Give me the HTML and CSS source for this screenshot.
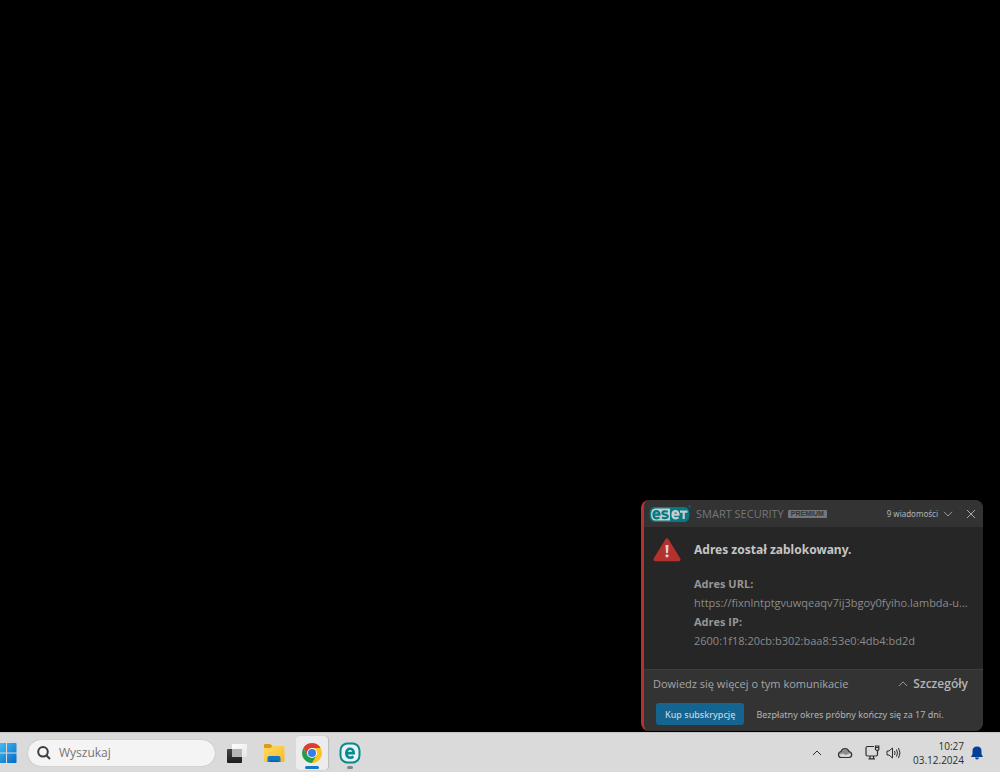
FILE: index.html
```html
<!DOCTYPE html>
<html lang="pl">
<head>
<meta charset="utf-8">
<meta name="viewport" content="width=device-width, initial-scale=1">
<title>ESET Smart Security Premium</title>
<link rel="stylesheet" href="styles.css">
</head>
<body>
<div class="screen">
  <main class="desktop">
    <section class="toast" role="alert" aria-labelledby="toast-title">
      <header class="toast-header">
        <svg class="eset-logo" viewBox="0 0 42 18" aria-hidden="true">
          <path d="M6 2H35Q40.500 2 40.500 9.500T35 17H6Q.5 17 .5 9.500T6 2Z" fill="#067a84"/>
          <path d="M6.500 3.500H21V15.500H6.500Q2 15.500 2 9.500T6.500 3.500Z" fill="#c9cccc"/>
          <g fill="none" stroke-width="2.200">
            <path d="M4.500 9.700H10.500C10.500 4.700 4.500 5 4.500 9.700C4.500 14 8.500 13.600 10.500 12.600" stroke="#067a84"/>
            <path d="M18.800 6.700C16.500 6 13.400 5.900 13.400 8C13.400 10.300 18.700 8.900 18.700 11.300C18.700 13.600 15.200 13.200 12.900 12.500" stroke="#067a84"/>
            <path d="M23.500 9.700H29.500C29.500 4.700 23.500 5 23.500 9.700C23.500 14 27.500 13.600 29.500 12.600" stroke="#c9cccc"/>
            <path d="M31 6.700H38.500M34.700 6.700V14" stroke="#c9cccc"/>
          </g>
          <circle cx="40.500" cy="1.500" r="1" fill="#067a84"/>
        </svg>
        <span class="product">SMART SECURITY</span>
        <span class="edition">PREMIUM</span>
        <button class="count" type="button">9 wiadomości
          <svg class="chev" viewBox="0 0 10 6" aria-hidden="true"><path d="M1 .8L5 5L9 .8"/></svg>
        </button>
        <button class="close" type="button" aria-label="Zamknij">
          <svg class="cross" viewBox="0 0 10 10" aria-hidden="true"><path d="M1 1L9 9M9 1L1 9"/></svg>
        </button>
      </header>
      <div class="toast-body">
        <svg class="alert-icon" viewBox="0 0 28 24" aria-hidden="true">
          <path d="M12.300 1.500Q14 -.8 15.700 1.500L27.300 20.500Q28.300 23 25.800 23.300H2.200Q-.3 23 .7 20.500Z" fill="#b5312d"/>
          <path d="M12.500 7H15.500L15 15H13Z" fill="#d8d4d3"/><circle cx="14" cy="17.800" r="1.600" fill="#d8d4d3"/>
        </svg>
        <div class="message">
          <h1 class="title" id="toast-title">Adres został zablokowany.</h1>
          <dl class="facts">
            <dt>Adres URL:</dt>
            <dd>https://fixnlntptgvuwqeaqv7ij3bgoy0fyiho.lambda-u...</dd>
            <dt>Adres IP:</dt>
            <dd>2600:1f18:20cb:b302:baa8:53e0:4db4:bd2d</dd>
          </dl>
        </div>
      </div>
      <footer class="toast-footer">
        <div class="links">
          <a class="learn" href="#">Dowiedz się więcej o tym komunikacie</a>
          <button class="details" type="button">
            <svg class="chev" viewBox="0 0 10 6" aria-hidden="true"><path d="M1 5L5 .8L9 5"/></svg>
            Szczegóły
          </button>
        </div>
        <div class="trial">
          <button class="buy" type="button">Kup subskrypcję</button>
          <span class="trial-text">Bezpłatny okres próbny kończy się za 17 dni.</span>
        </div>
      </footer>
    </section>
  </main>
  <nav class="taskbar" aria-label="Pasek zadań">
    <button class="start" type="button" aria-label="Start">
      <svg class="start-icon" viewBox="0 0 17 20" aria-hidden="true">
        <defs><linearGradient id="win" gradientUnits="userSpaceOnUse" x1="-3" y1="0" x2="17" y2="20"><stop offset="0" stop-color="#48c4f5"/><stop offset="1" stop-color="#0067c8"/></linearGradient></defs>
        <path d="M0 0H6V9.500H0ZM7 0H15.500Q16.500 0 16.500 1V9.500H7ZM0 10.500H6V20H0ZM7 10.500H16.500V19Q16.500 20 15.500 20H7Z" fill="url(#win)"/>
      </svg>
    </button>
    <label class="search">
      <svg class="search-icon" viewBox="0 0 14 14" aria-hidden="true"><circle cx="6" cy="5.800" r="4.800"/><path d="M9.500 9.500L13 13"/></svg>
      <input class="search-input" type="text" placeholder="Wyszukaj" aria-label="Wyszukaj">
    </label>
    <div class="apps">
      <button class="app" type="button" aria-label="Widok zadań">
        <svg class="app-icon" viewBox="0 0 24 24" aria-hidden="true">
          <defs><linearGradient id="tv" x1="0" y1="0" x2="0" y2="1"><stop offset="0" stop-color="#444"/><stop offset="1" stop-color="#1c1c1c"/></linearGradient><linearGradient id="tvf" x1="0" y1="0" x2="1" y2="1"><stop offset="0" stop-color="#fff"/><stop offset="1" stop-color="#e5e5e5"/></linearGradient></defs>
          <rect x="3" y="8" width="15" height="14" rx="1" fill="url(#tv)"/>
          <rect x="8" y="3" width="15" height="13" rx="1" fill="url(#tvf)"/>
          <path d="M8 8H18V16H8Z" fill="#b5b5b5"/>
        </svg>
      </button>
      <button class="app" type="button" aria-label="Eksplorator plików">
        <svg class="app-icon" viewBox="0 0 24 24" aria-hidden="true">
          <defs><linearGradient id="fold" x1="0" y1="0" x2="1" y2="1"><stop offset="0" stop-color="#ffda61"/><stop offset="1" stop-color="#f9b927"/></linearGradient></defs>
          <path d="M2 4Q2 3 3 3H8L10.500 5H20Q21 5 21 6V10H2Z" fill="#dc9c1a"/>
          <path d="M2 7H8.500L10.500 5H21Q22.500 5 22.500 6.500V19.500Q22.500 21 21 21H3.500Q2 21 2 19.500Z" fill="url(#fold)"/>
          <path d="M5.500 21V17Q5.500 15 7.500 15H16.500Q18.500 15 18.500 17V21Z" fill="#1377c9"/>
          <path d="M8 19.500H16V21H8Z" fill="#075ba5"/>
        </svg>
      </button>
      <button class="app app-active" type="button" aria-label="Google Chrome">
        <svg class="app-icon" viewBox="0 0 24 24" aria-hidden="true">
          <path d="M12 12V7H20.660A10 10 0 0 1 12 22Z" fill="#fbc51b"/>
          <path d="M12 7H20.660A10 10 0 0 0 3.340 7L7.670 14.500Z" fill="#df3c30"/>
          <path d="M3.340 7A10 10 0 0 0 12 22L16.330 14.500H7.670Z" fill="#259c4b"/>
          <circle cx="12" cy="12" r="5" fill="#fff"/><circle cx="12" cy="12" r="4" fill="#377de8"/>
        </svg>
      </button>
      <button class="app app-running" type="button" aria-label="ESET">
        <svg class="app-icon" viewBox="0 0 24 24" aria-hidden="true">
          <rect x="2.500" y="2.500" width="19" height="19" rx="7" fill="#e9f3f3" stroke="#078a92" stroke-width="2"/>
          <path d="M8.300 12.100H15.700C15.700 6.300 8.300 6.300 8.300 12.100C8.300 17.500 13 17.300 15.500 15.700" fill="none" stroke="#078a92" stroke-width="2.600"/>
        </svg>
      </button>
    </div>
    <div class="tray">
      <button class="tray-button overflow" type="button" aria-label="Pokaż ukryte ikony">
        <svg class="chev chev-dark" viewBox="0 0 10 6" aria-hidden="true"><path d="M1 5L5 1L9 5"/></svg>
      </button>
      <button class="tray-button cloud" type="button" aria-label="OneDrive">
        <svg class="cloud-icon" viewBox="0 0 16 12" aria-hidden="true"><path d="M4 10.500Q1.500 10.500 1.500 7.500Q1.500 5 4 4.500Q5 1.500 8 1.500Q11 1.500 12 4.500Q14.700 5 14.700 7.500Q14.700 10.500 12 10.500Z" fill="#d4d4d4"/><path d="M2 7.500Q2.500 4.500 4.500 4.500Q5.500 2 8 2Q11 2 12 4.700Q14 5 14.500 7L12 6.500L9 8L6 6.500Z" fill="#8b8b8b"/><path d="M4 10.500Q1.500 10.500 1.500 7.500Q1.500 5 4 4.500Q5 1.500 8 1.500Q11 1.500 12 4.500Q14.700 5 14.700 7.500Q14.700 10.500 12 10.500Z" fill="none" stroke="#2f2f2f" stroke-width="1.200"/></svg>
      </button>
      <button class="tray-button system" type="button" aria-label="Sieć i głośność">
        <svg class="net-icon" viewBox="0 0 15 15" aria-hidden="true"><path d="M9 1.500H2.500Q1 1.500 1 3V9.500Q1 11 2.500 11H11Q12.500 11 12.500 9.500V5.500M5 11V13.500M8.500 11V13.500M3.500 13.800H10M10.500 1H13.800V4.500Q12 6.500 10.500 4.500ZM10.500 2.500H13.800" fill="none" stroke="#2c2c2c" stroke-width="1.200"/></svg>
        <svg class="sound-icon" viewBox="0 0 15 12" aria-hidden="true"><path d="M1 4H3L6.500 1V11L3 8H1ZM8.500 4Q9.700 6 8.500 8M10.500 2.500Q12.500 6 10.500 9.500M12.500 1Q15.500 6 12.500 11" fill="none" stroke="#2c2c2c"/></svg>
      </button>
      <button class="tray-button clock" type="button"><time>10:27</time><time>03.12.2024</time></button>
      <button class="tray-button bell" type="button" aria-label="Powiadomienia">
        <svg class="bell-icon" viewBox="0 0 12 14" aria-hidden="true"><path d="M6 .5Q10.500 .5 10.500 5V8L12 11H0L1.500 8V5Q1.500 .5 6 .5ZM4 11.500H8Q7.800 13.500 6 13.500T4 11.500Z" fill="#033f94"/></svg>
      </button>
    </div>
  </nav>
</div>
</body>
</html>
```
FILE: styles.css
```css
* {
  box-sizing: border-box;
}

body {
  margin: 0;
  background: #000;
  font-family: "Open Sans", "Noto Sans", sans-serif;
}

button,
input {
  margin: 0;
  padding: 0;
  border: 0;
  background: none;
  color: inherit;
  font: inherit;
}

svg {
  display: block;
  flex: none;
}

.screen {
  display: flex;
  flex-direction: column;
  min-height: 100vh;
}

.desktop {
  display: flex;
  flex: 1;
  align-items: flex-end;
  justify-content: flex-end;
  padding: 0 17px 1px 16px;
}

.toast {
  width: 342px;
  max-width: 100%;
  overflow: hidden;
  border-left: 3px solid #b5312d;
  border-radius: 8px;
  background: #262626;
  color: #b4b4b4;
}

.toast-header {
  display: flex;
  align-items: center;
  height: 27px;
  padding: 0 6px 0 5px;
  background: #333;
}

.eset-logo {
  width: 42px;
  height: 18px;
}

.product {
  margin-left: 5px;
  color: #73787a;
  font-size: 11px;
}

.edition {
  margin-left: 4px;
  padding: 0 3px;
  border-radius: 1px;
  background: #71777a;
  color: #333;
  font-family: "Liberation Sans", sans-serif;
  font-size: 7px;
  font-weight: 700;
  line-height: 8px;
}

.count {
  display: flex;
  align-items: center;
  gap: 5px;
  margin-left: auto;
  font-family: "Noto Sans", sans-serif;
  font-size: 8px;
}

.chev {
  width: 10px;
  height: 6px;
  fill: none;
  stroke: #999;
}

.close {
  display: grid;
  place-items: center;
  width: 12px;
  height: 16px;
  margin-left: 12px;
}

.cross {
  width: 10px;
  height: 10px;
  fill: none;
  stroke: #aaa;
}

.toast-body {
  display: flex;
  gap: 13px;
  min-height: 142px;
  padding: 11px 8px 16px 9px;
}

.alert-icon {
  width: 28px;
  height: 24px;
}

.title {
  margin: 2px 0 14px;
  color: #c4c4c4;
  font-family: "Noto Sans", sans-serif;
  font-size: 12px;
  font-weight: 700;
  line-height: 20px;
}

.facts {
  margin: 0;
  color: #8b8b8b;
  font-size: 11px;
  line-height: 19px;
}

.facts dt {
  color: #969696;
  font-weight: 700;
}

.facts dd {
  margin: 0;
  white-space: nowrap;
}

.toast-footer {
  padding: 4px 15px 6px 9px;
  border-top: 1px solid #3d3d3d;
  background: #333;
}

.links {
  display: flex;
  align-items: center;
  justify-content: space-between;
  font-size: 11px;
  line-height: 20px;
}

.learn {
  color: #a6a6a6;
  text-decoration: none;
}

.details {
  display: flex;
  align-items: center;
  gap: 5px;
  font-size: 12px;
  font-weight: 600;
}

.trial {
  display: flex;
  align-items: center;
  gap: 12px;
  margin-top: 9px;
  padding-left: 3px;
  font-family: "Noto Sans", sans-serif;
  font-size: 9px;
}

.buy {
  height: 22px;
  padding: 0 9px;
  border-radius: 3px;
  background: #15648f;
  color: #c5d3dc;
  font-weight: 500;
}

.taskbar {
  display: flex;
  align-items: center;
  height: 40px;
  border-top: 1px solid #c4c4c4;
  background: #dadada;
  color: #2c2c2c;
}

.start-icon {
  width: 17px;
  height: 20px;
}

.search {
  display: flex;
  align-items: center;
  gap: 8px;
  width: 187px;
  height: 26px;
  margin-left: 11px;
  padding: 0 9px;
  border-radius: 13px;
  background: #f4f4f4;
  box-shadow: 0 0 1px #999;
}

.search-icon {
  width: 14px;
  height: 14px;
  fill: none;
  stroke: #3d3d3d;
  stroke-width: 2;
}

.search-input {
  flex: 1;
  min-width: 0;
  outline: 0;
  font-size: 12px;
}

.search-input::placeholder {
  color: #747474;
  opacity: 1;
}

.apps {
  display: flex;
  gap: 6px;
  margin-left: 5px;
}

.app {
  position: relative;
  display: grid;
  place-items: center;
  width: 32px;
  height: 34px;
  border-radius: 4px;
}

.app-icon {
  width: 24px;
  height: 24px;
}

.app-active {
  background: #ececec;
  box-shadow: 1px 0 1px #bbb;
}

.app-active::after,
.app-running::after {
  position: absolute;
  bottom: 1px;
  left: 50%;
  width: 14px;
  height: 3px;
  border-radius: 2px;
  background: #1477cc;
  content: "";
  transform: translateX(-50%);
}

.app-running::after {
  width: 6px;
  background: #858585;
}

.tray {
  display: flex;
  align-items: center;
  margin-left: auto;
  padding-right: 17px;
}

.chev-dark {
  stroke: #2c2c2c;
}

.cloud {
  margin-left: 15px;
}

.cloud-icon {
  width: 16px;
  height: 12px;
}

.system {
  display: flex;
  align-items: center;
  gap: 6px;
  margin-left: 12px;
}

.net-icon {
  width: 15px;
  height: 15px;
}

.sound-icon {
  width: 15px;
  height: 12px;
}

.clock {
  display: flex;
  flex-direction: column;
  align-items: flex-end;
  margin-left: 12px;
  font-size: 10px;
  line-height: 14px;
}

.bell {
  margin-left: 7px;
}

.bell-icon {
  width: 12px;
  height: 14px;
}
```
